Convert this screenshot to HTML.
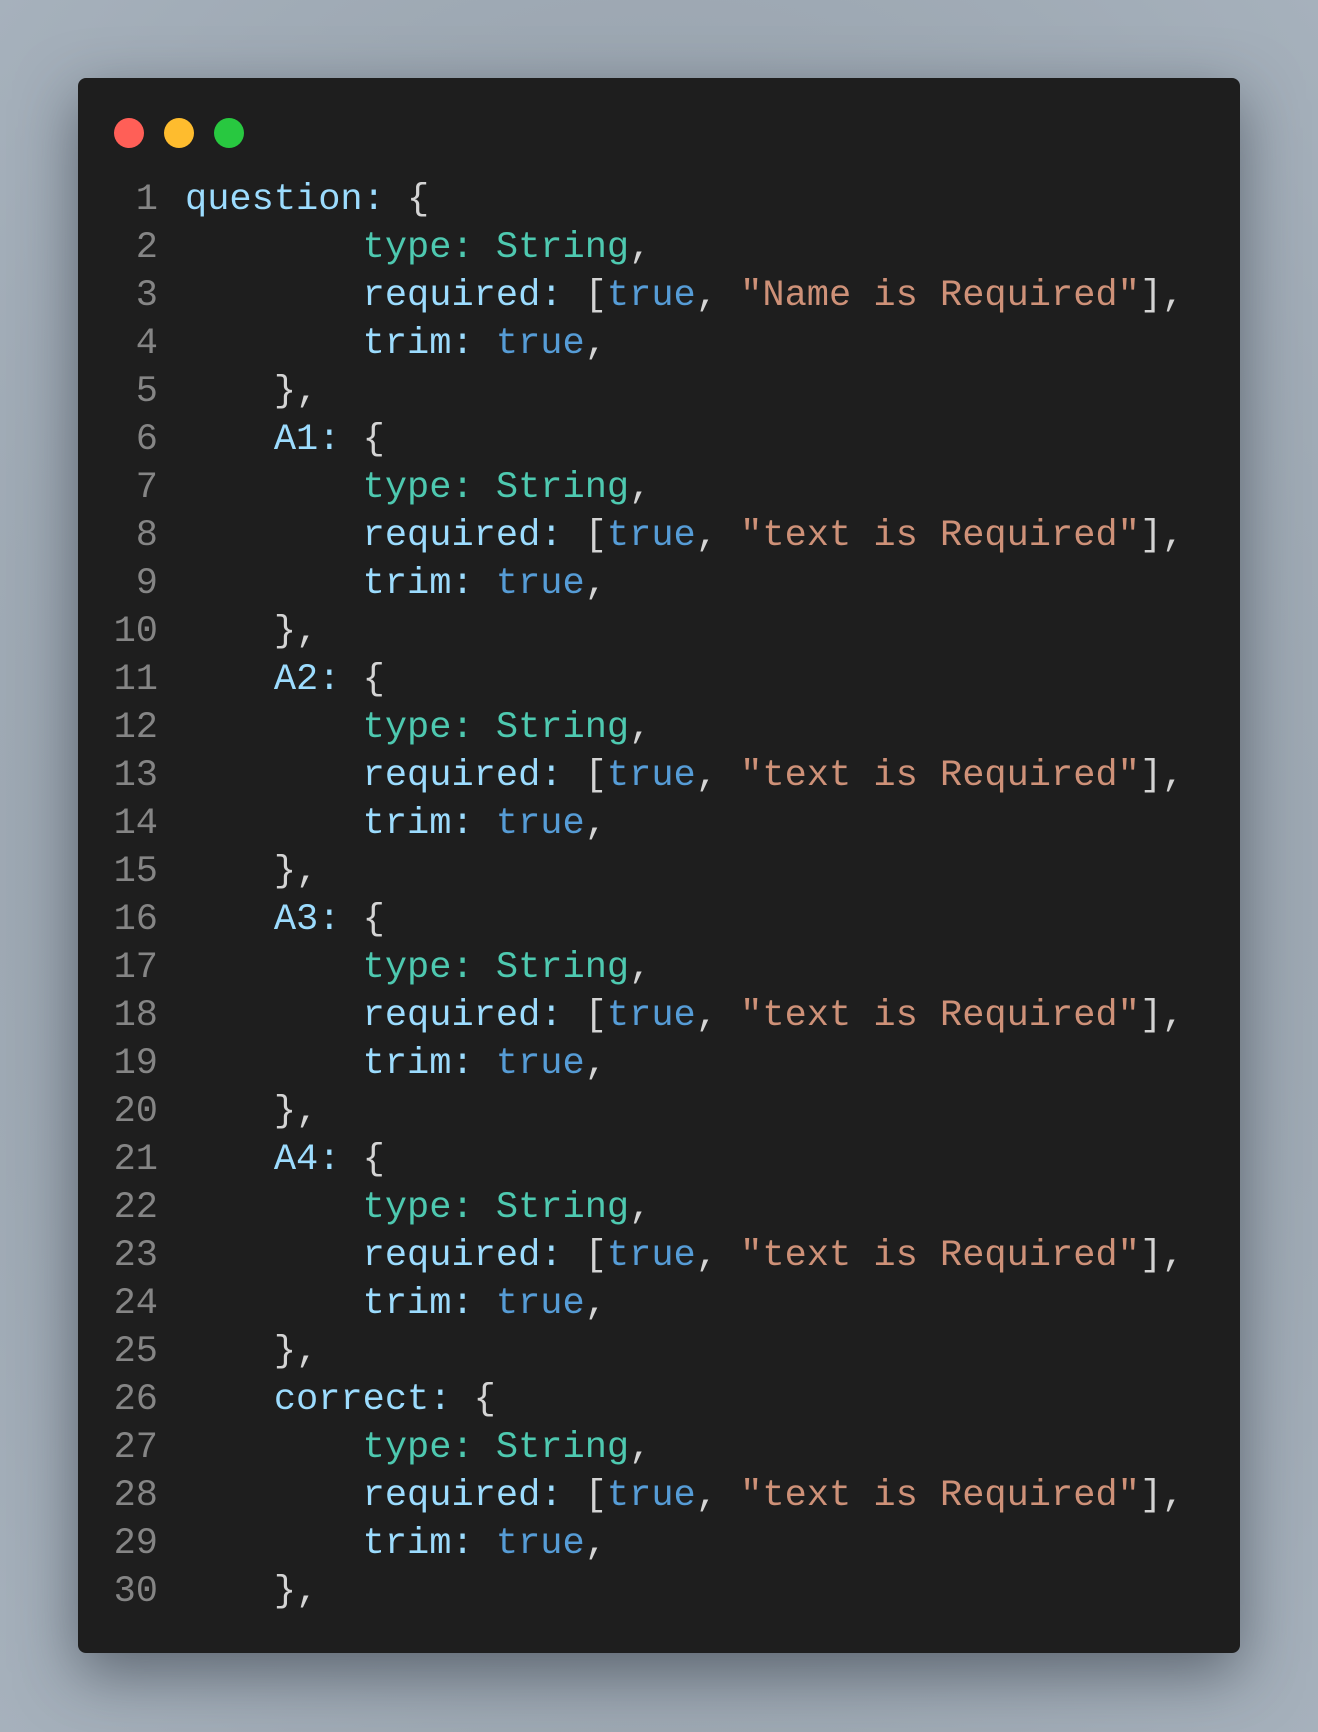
<!DOCTYPE html>
<html><head><meta charset="utf-8"><style>
html,body{margin:0;padding:0}
body{width:1318px;height:1732px;background:radial-gradient(ellipse at center,#8a949e 0%,#a6b1bc 100%);position:relative;overflow:hidden;font-family:"Liberation Mono",monospace}
.win{position:absolute;left:78px;top:78px;width:1162px;height:1575px;background:#1e1e1e;border-radius:8px;box-shadow:0 20px 60px rgba(40,48,58,0.55)}
.dot{position:absolute;top:118px;width:30px;height:30px;border-radius:50%}
.code{position:absolute;left:0;top:176px;font-size:37px;line-height:48px;white-space:pre;color:#d4d4d4}
.ln{display:inline-block;width:158px;text-align:right;color:#858585}
.g{display:inline-block;width:27px}
.k{color:#9cdcfe}.t{color:#4ec9b0}.b{color:#569cd6}.s{color:#ce9178}
</style></head><body>
<div class="win"></div>
<div class="dot" style="left:114px;background:#ff5f57"></div>
<div class="dot" style="left:164px;background:#febc2e"></div>
<div class="dot" style="left:214px;background:#28c840"></div>
<div class="code"><span class="ln">1</span><span class="g"></span><span class="k">question:</span> {
<span class="ln">2</span><span class="g"></span>        <span class="t">type:</span> <span class="t">String</span>,
<span class="ln">3</span><span class="g"></span>        <span class="k">required:</span> [<span class="b">true</span>, <span class="s">"Name is Required"</span>],
<span class="ln">4</span><span class="g"></span>        <span class="k">trim:</span> <span class="b">true</span>,
<span class="ln">5</span><span class="g"></span>    },
<span class="ln">6</span><span class="g"></span>    <span class="k">A1:</span> {
<span class="ln">7</span><span class="g"></span>        <span class="t">type:</span> <span class="t">String</span>,
<span class="ln">8</span><span class="g"></span>        <span class="k">required:</span> [<span class="b">true</span>, <span class="s">"text is Required"</span>],
<span class="ln">9</span><span class="g"></span>        <span class="k">trim:</span> <span class="b">true</span>,
<span class="ln">10</span><span class="g"></span>    },
<span class="ln">11</span><span class="g"></span>    <span class="k">A2:</span> {
<span class="ln">12</span><span class="g"></span>        <span class="t">type:</span> <span class="t">String</span>,
<span class="ln">13</span><span class="g"></span>        <span class="k">required:</span> [<span class="b">true</span>, <span class="s">"text is Required"</span>],
<span class="ln">14</span><span class="g"></span>        <span class="k">trim:</span> <span class="b">true</span>,
<span class="ln">15</span><span class="g"></span>    },
<span class="ln">16</span><span class="g"></span>    <span class="k">A3:</span> {
<span class="ln">17</span><span class="g"></span>        <span class="t">type:</span> <span class="t">String</span>,
<span class="ln">18</span><span class="g"></span>        <span class="k">required:</span> [<span class="b">true</span>, <span class="s">"text is Required"</span>],
<span class="ln">19</span><span class="g"></span>        <span class="k">trim:</span> <span class="b">true</span>,
<span class="ln">20</span><span class="g"></span>    },
<span class="ln">21</span><span class="g"></span>    <span class="k">A4:</span> {
<span class="ln">22</span><span class="g"></span>        <span class="t">type:</span> <span class="t">String</span>,
<span class="ln">23</span><span class="g"></span>        <span class="k">required:</span> [<span class="b">true</span>, <span class="s">"text is Required"</span>],
<span class="ln">24</span><span class="g"></span>        <span class="k">trim:</span> <span class="b">true</span>,
<span class="ln">25</span><span class="g"></span>    },
<span class="ln">26</span><span class="g"></span>    <span class="k">correct:</span> {
<span class="ln">27</span><span class="g"></span>        <span class="t">type:</span> <span class="t">String</span>,
<span class="ln">28</span><span class="g"></span>        <span class="k">required:</span> [<span class="b">true</span>, <span class="s">"text is Required"</span>],
<span class="ln">29</span><span class="g"></span>        <span class="k">trim:</span> <span class="b">true</span>,
<span class="ln">30</span><span class="g"></span>    },</div>
</body></html>
